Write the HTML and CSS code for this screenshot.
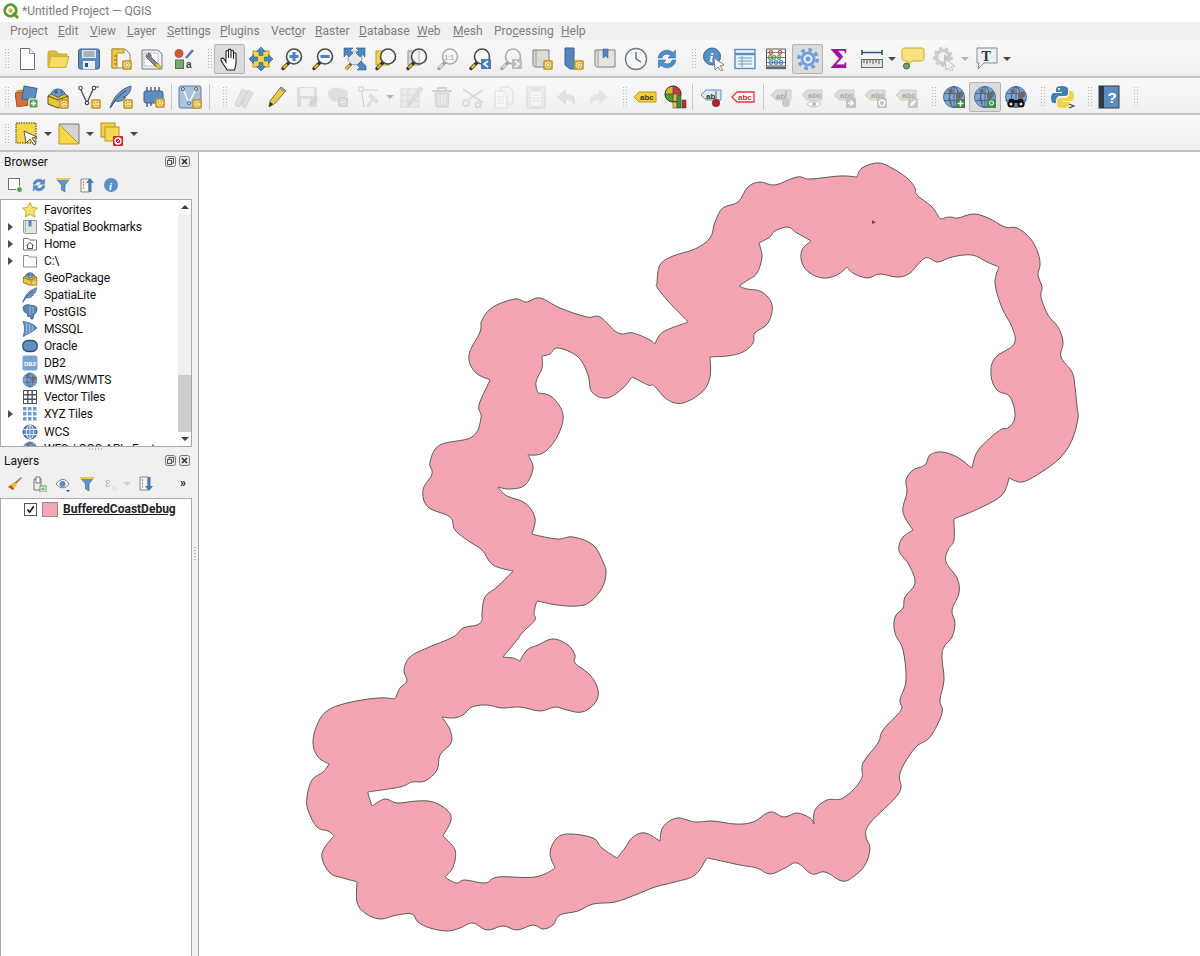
FILE: index.html
```html
<!DOCTYPE html>
<html lang="en">
<head>
<meta charset="utf-8">
<title>*Untitled Project — QGIS</title>
<link rel="stylesheet" href="styles.css">
</head>
<body>
<svg class="sprite" xmlns="http://www.w3.org/2000/svg">
<defs>
<g id="gb"><rect x=".5" y=".5" width="9" height="9" rx="1" fill="#d2a72c" stroke="#b8901f" stroke-width=".6"/><circle cx="5" cy="5" r="2.6" fill="none" stroke="#fff" stroke-width="1.3" stroke-dasharray="1.1 .7"/><circle cx="5" cy="5" r="1" fill="#fff"/></g>
<g id="m"><path d="M3 21.5L9 15.5" stroke="#333" stroke-width="3.4" stroke-linecap="round"/><path d="M3.5 21L7 17.5" stroke="#e6c02e" stroke-width="2.2"/><circle cx="14" cy="9.5" r="7.5" fill="#f4f6f8" stroke="#4a4a4a" stroke-width="1.6"/></g>
<g id="globe"><circle cx="12" cy="12" r="10.5" fill="#7ba6d8" stroke="#4d73a6"/><ellipse cx="12" cy="12" rx="4.5" ry="10.5" fill="none" stroke="#49596e"/><path d="M2 8.5h20M2 15.5h20M12 1.5v21" stroke="#4d5f78" stroke-width=".9"/><path d="M6 5l4-2 1 4-3 3zM14 8l6-2 1 5-5 5-2-3zM6 13l3 1 1 5-3-2z" fill="#6a6a6a"/></g>
<g id="tagy"><path d="M1 12l5-5h17v10H6z" fill="#f2cf3d" stroke="#bd9a1d"/><text x="7" y="15.2" class="st">abc</text></g>
<g id="tagg"><path d="M1 10l5-5h15v10H6z" fill="#dedcd6" stroke="#cfcdc6"/><text x="7" y="13.2" class="stg">abc</text></g>
<symbol id="new" viewBox="0 0 24 24"><path d="M5.5 1.5h9l5 5v16h-14z" fill="#fff" stroke="#6b6b6b"/><path d="M14.5 1.5v5h5" fill="#f2f2f2" stroke="#8b8b8b"/></symbol>
<symbol id="open" viewBox="0 0 24 24"><path d="M2 20V6l1-2h7l2 3h9v4H5l-2 9z" fill="#d9b93e" stroke="#c9a93a"/><path d="M2.500 20.500L5 9.500h18l-3 11z" fill="#f6da66" stroke="#d1b140"/></symbol>
<symbol id="save" viewBox="0 0 24 24"><rect x="1.500" y="2" width="21" height="20" rx="2" fill="#5c8dbf" stroke="#43658a"/><rect x="5" y="3" width="14" height="8" fill="#dfe6ee"/><path d="M6.500 5h11M6.500 7h11M6.500 9h11" stroke="#6a7f96"/><rect x="6" y="14" width="12" height="8" fill="#e9eef2"/><rect x="8" y="16" width="3" height="4" fill="#3a516b"/></symbol>
<symbol id="tmpl" viewBox="0 0 24 24"><path d="M3 2h13l5 5v14H3z" fill="#f4f4f2" stroke="#888"/><path d="M3 2h12v4H8v15H3z" fill="#edc94c" stroke="#b5941f"/><path d="M5 9h3M5 13h3M5 17h3" stroke="#87700f"/><use href="#gb" x="13" y="13"/></symbol>
<symbol id="lmgr" viewBox="0 0 24 24"><path d="M2 3h16l4 4v15H2z" fill="#eef2f6" stroke="#7b7b7b"/><rect x="4" y="6" width="14" height="13" fill="#fff" stroke="#b5c2cf"/><path d="M7 7a3 3 0 0 0 1 5l8 8 3-2-8-8a3 3 0 0 0-3-4l1 3-2 0z" fill="#8a8a8a" stroke="#444" stroke-width=".7"/><path d="M15 18l4 4 2-2-3-4z" fill="#e0c044" stroke="#a8891c" stroke-width=".7"/></symbol>
<symbol id="style" viewBox="0 0 24 24"><circle cx="8" cy="6.500" r="4.500" fill="#c65a3b"/><path d="M15 11L22 3" stroke="#4d7fb5" stroke-width="2.600"/><rect x="4.500" y="13" width="8" height="8.500" fill="#78a878" stroke="#4c7d4c"/><text x="15" y="21" class="sa">a</text></symbol>
<symbol id="hand" viewBox="0 0 24 24"><path d="M9 23C7 19 3.500 15 3 13c-.5-2 1.500-2.500 3-1l2 3V5c0-2 2.500-2 2.500 0v6-7.500c0-1.800 2.500-1.800 2.500 0V11V4.500c0-1.700 2.500-1.700 2.500 0V12V7c0-1.600 2.500-1.600 2.500 0v9c0 3-1 4.500-1.500 7z" fill="#fff" stroke="#222" stroke-width="1.100"/></symbol>
<symbol id="panx" viewBox="0 0 24 24"><rect x="4" y="4" width="16" height="16" fill="#f0d64a" stroke="#b59c1f"/><path d="M12 0l4.500 4.500h-2.500v4h-4v-4H7.500zM12 24l4.500-4.500h-2.500v-4h-4v4H7.500zM0 12l4.500-4.500V10h4v4h-4v2.500zM24 12l-4.500-4.500V10h-4v4h4v2.500z" fill="#4d86c4" stroke="#32608f" stroke-width=".6"/></symbol>
<symbol id="zin" viewBox="0 0 24 24"><use href="#m"/><path d="M14 5v9M9.500 9.500h9" stroke="#4a82bd" stroke-width="3"/></symbol>
<symbol id="zout" viewBox="0 0 24 24"><use href="#m"/><path d="M9.500 9.500h9" stroke="#4a82bd" stroke-width="3"/></symbol>
<symbol id="zfull" viewBox="0 0 24 24"><circle cx="12" cy="11" r="7" fill="#e4e6e8" stroke="#9a9a9a"/><path d="M2 1h8L7.500 3.500 10 6 6 10 3.500 7.500 1 10V1zM22 1v9l-2.500-2.500L17 10l-4-4 2.500-2.500L13 1zM23 19v4h-9l2.500-2.500L14 18l4-4 2.500 2.500z" fill="#4d86c4" stroke="#2f5d8c" stroke-width=".6"/><path d="M3 22l5-5" stroke="#333" stroke-width="3"/><path d="M3 22l4-4" stroke="#e6c02e" stroke-width="2"/></symbol>
<symbol id="zsel" viewBox="0 0 24 24"><rect x="2" y="4" width="13" height="14" fill="#f0d64a" stroke="#b59c1f"/><use href="#m"/></symbol>
<symbol id="zlay" viewBox="0 0 24 24"><path d="M3 4h12v14H3z" fill="#d9d9d6" stroke="#8f8f8f"/><use href="#m"/><path d="M14 3v13" stroke="#aaa"/></symbol>
<symbol id="z11" viewBox="0 0 24 24"><use href="#m"/><text x="8.500" y="12.500" class="s8">1:1</text></symbol>
<symbol id="zlast" viewBox="0 0 24 24"><use href="#m"/><rect x="13" y="12" width="10" height="10" fill="#4d7fb5"/><path d="M20 14l-4 3 4 3" fill="none" stroke="#fff" stroke-width="1.600"/></symbol>
<symbol id="znext" viewBox="0 0 24 24"><use href="#m"/><rect x="13" y="12" width="10" height="10" fill="#777"/><path d="M16 14l4 3-4 3" fill="none" stroke="#fff" stroke-width="1.600"/></symbol>
<symbol id="nmap" viewBox="0 0 24 24"><path d="M3 3h16v17H6c-2 0-3-1-3-2z" fill="#dbdbd8" stroke="#7f7f7f"/><path d="M6 3v16" stroke="#9b9b9b"/><use href="#gb" x="13" y="13"/></symbol>
<symbol id="nbm" viewBox="0 0 24 24"><path d="M4 1h9v16l3 5H9l-5-4z" fill="#5686bb" stroke="#3c6390"/><use href="#gb" x="13" y="13"/></symbol>
<symbol id="sbm" viewBox="0 0 24 24"><path d="M2 3h20v17H5c-2 0-3-1-3-2z" fill="#e3e3e0" stroke="#7f7f7f"/><path d="M5 3v16" stroke="#9b9b9b"/><path d="M10 2h5v9l-2.500-2-2.500 2z" fill="#5686bb" stroke="#3c6390" stroke-width=".6"/></symbol>
<symbol id="clock" viewBox="0 0 24 24"><circle cx="12" cy="12" r="10.500" fill="#f4f6f8" stroke="#6f7b88" stroke-width="1.400"/><path d="M12 5v7l5 3" fill="none" stroke="#555" stroke-width="1.200"/></symbol>
<symbol id="refr" viewBox="0 0 24 24"><path d="M3 11C4 5 9 2.500 14 3.500c2 .4 3 1.300 4 2l2.500-2.500V11H13l2.500-2.500C12 6 8 7 7 11z" fill="#4e8ccb" stroke="#366ea7" stroke-width=".6"/><path d="M21 13c-1 6-6 8.500-11 7.500-2-.4-3-1.300-4-2L3.500 21v-8H11l-2.500 2.500C12 18 16 17 17 13z" fill="#4e8ccb" stroke="#366ea7" stroke-width=".6"/></symbol>
<symbol id="ident" viewBox="0 0 24 24"><circle cx="10" cy="9.500" r="8.500" fill="#5a8ec6" stroke="#3d6a9b"/><text x="7.500" y="15" class="si">i</text><path d="M12 11l10 7-4 1 3 4-2 1-3-4-3 3z" fill="#fff" stroke="#777" stroke-width=".9"/></symbol>
<symbol id="tbl" viewBox="0 0 24 24"><rect x="2" y="2.500" width="20" height="19" fill="#eef3f8" stroke="#5b8cc0" stroke-width="1.400"/><path d="M2 7h20" stroke="#5b8cc0" stroke-width="2.400"/><path d="M5 11h14M5 14h14M5 17h14M9 9v11" stroke="#6f9ccc"/></symbol>
<symbol id="abac" viewBox="0 0 24 24"><path d="M2.500 2v17h19V2z" fill="#f7f7f7" stroke="#555"/><path d="M2 21h20" stroke="#666" stroke-width="2.400"/><path d="M3 5.500h18M3 10.500h18M3 15.500h18" stroke="#888"/><g fill="none" stroke-width="1.300"><g stroke="#c8554a"><circle cx="7" cy="5.500" r="1.800"/><circle cx="16" cy="5.500" r="1.800"/></g><g stroke="#5d9c5d"><circle cx="6" cy="10.500" r="1.800"/><circle cx="10" cy="10.500" r="1.800"/><circle cx="15" cy="10.500" r="1.800"/></g><g stroke="#4d86c4"><circle cx="7" cy="15.500" r="1.800"/><circle cx="12" cy="15.500" r="1.800"/><circle cx="17" cy="15.500" r="1.800"/></g></g></symbol>
<symbol id="gear" viewBox="0 0 24 24"><circle cx="12" cy="12" r="6" fill="#dfe9f5" stroke="#6d9fd8" stroke-width="2.600"/><circle cx="12" cy="12" r="2.400" fill="#6d9fd8"/><circle cx="12" cy="12" r="9.200" fill="none" stroke="#6d9fd8" stroke-width="3.400" stroke-dasharray="3.600 3.630"/></symbol>
<symbol id="ruler" viewBox="0 0 24 24"><path d="M2 3v5M22 3v5M2 5.500h20" stroke="#2f5379" stroke-width="1.600"/><rect x="1.500" y="12.500" width="21" height="8" fill="#e6e6e6" stroke="#6a6a6a"/><path d="M4 13v3M7 13v4M10 13v3M13 13v4M16 13v3M19 13v4" stroke="#555"/></symbol>
<symbol id="tip" viewBox="0 0 24 24"><path d="M4 1h17c1.500 0 2 1 2 2v8c0 2-1 3-3 3H11l-3 4-1-4H4c-2 0-3-1-3-3V3c0-1 1-2 3-2z" fill="#f7e27f" stroke="#c9a93a"/><circle cx="5.500" cy="19" r="3" fill="#6f9f6a" stroke="#3f6a3c"/></symbol>
<symbol id="goff" viewBox="0 0 24 24"><circle cx="10" cy="10" r="6.500" fill="none" stroke="#999" stroke-width="3.500"/><circle cx="10" cy="10" r="8.500" fill="none" stroke="#999" stroke-width="3" stroke-dasharray="3 3"/><path d="M11 7v7l5-3.500z" fill="#888"/><path d="M12 12l10 7-4 1 2 3-2 1-2-3-3 2z" fill="#fff" stroke="#777"/></symbol>
<symbol id="tbox" viewBox="0 0 24 24"><path d="M2 1h20v15H9l-6 6 1-6H2z" fill="#eaf1f6" stroke="#8b8b8b"/><text x="6.500" y="13.500" class="st2">T</text></symbol>
<symbol id="dsm" viewBox="0 0 24 24"><rect x="3" y="5" width="11" height="15" fill="#f2c84a" stroke="#b8901f" transform="rotate(-10 8 12)"/><rect x="1" y="7" width="11" height="14" fill="#d07040" stroke="#a24e28" transform="rotate(-8 7 14)"/><rect x="8" y="2" width="13" height="13" fill="#5d8cc0" stroke="#3c6390" transform="rotate(10 14 8)"/><rect x="14" y="14" width="9" height="9" rx="1" fill="#5a9f5a" stroke="#fff"/><path d="M18.500 16v5M16 18.500h5" stroke="#fff" stroke-width="1.600"/></symbol>
<symbol id="gpk" viewBox="0 0 24 24"><path d="M2 11l10-6 10 6v8l-10 4-10-4z" fill="#e8c43a" stroke="#5e5216"/><path d="M2 11l10 4 10-4" fill="none" stroke="#5e5216"/><path d="M5 8.500C7 3 16 2 19 8.500L12 12.500z" fill="#6f9bd0" stroke="#3e5f88"/><path d="M8 6l3-1 1 3-3 1zM14 6l3 1-2 2z" fill="#55606e"/><use href="#gb" x="13" y="14"/></symbol>
<symbol id="vnew" viewBox="0 0 24 24"><path d="M3 3l7 15 7-16" fill="none" stroke="#4a4a4a" stroke-width="1.300"/><path d="M16 2h6" stroke="#4a4a4a"/><g fill="#fff" stroke="#333"><circle cx="3.500" cy="3" r="1.800"/><circle cx="10" cy="18" r="1.800"/><circle cx="17" cy="3" r="1.800"/></g><use href="#gb" x="14" y="14"/></symbol>
<symbol id="feat" viewBox="0 0 24 24"><path d="M1 23C4 14 9 5 22 1c0 7-4 10-8 11l3 0c-3 4-7 5-11 4z" fill="#6f97c4" stroke="#3f648f"/><path d="M2 22C6 15 11 9 17 6" fill="none" stroke="#2f4f74"/></symbol>
<symbol id="feat2" viewBox="0 0 24 24"><use href="#feat"/><use href="#gb" x="14" y="14"/></symbol>
<symbol id="chip" viewBox="0 0 24 24"><rect x="2" y="6" width="19" height="12" rx="2" fill="#5b8fc4" stroke="#3c6390"/><path d="M5 2v4M9 2v4M13 2v4M17 2v4M5 18v4M9 18v3" stroke="#3c4f64" stroke-width="1.300"/><use href="#gb" x="13" y="13"/></symbol>
<symbol id="vbox" viewBox="0 0 24 24"><rect x="1" y="1" width="22" height="22" rx="2" fill="#a9c3dd" stroke="#5b7fa5"/><path d="M5 4l6 14 7-14" fill="none" stroke="#fff" stroke-width="1.300"/><g fill="#fff" stroke="#555"><circle cx="5" cy="4" r="1.500"/><circle cx="11" cy="18" r="1.500"/><circle cx="18" cy="4" r="1.500"/></g><use href="#gb" x="14" y="14"/></symbol>
<symbol id="pens" viewBox="0 0 24 24"><path d="M3 20L10 4l5 3-8 15zM9 20l7-15 5 3-8 15z" fill="#c9c7c2" stroke="#a8a6a0"/></symbol>
<symbol id="pen" viewBox="0 0 24 24"><path d="M5 22l1-6L17 2l5 4L10 19z" fill="#eacb4c" stroke="#7f7434"/><path d="M5 22l1-5 3 2z" fill="#333"/><path d="M16 3l5 4" stroke="#999" stroke-width="2"/></symbol>
<symbol id="saved" viewBox="0 0 24 24"><rect x="2" y="2" width="20" height="20" rx="2" fill="#bdbdbb"/><rect x="5" y="3" width="14" height="8" fill="#eee"/><rect x="6" y="14" width="10" height="8" fill="#eee"/><path d="M13 22l2-6 6-5 2 3-6 6z" fill="#aaa"/></symbol>
<symbol id="polys" viewBox="0 0 24 24"><path d="M2 8c0-5 7-6 10-5s10 0 10 5-5 4-8 7-12 2-12-7z" fill="#c4c4c2"/><use href="#gb" x="12" y="12"/></symbol>
<symbol id="dig" viewBox="0 0 24 24"><path d="M3 3l5 2 13 0M4 4l3 18" fill="none" stroke="#999"/><rect x="2" y="2" width="4" height="4" fill="#fff" stroke="#999"/><path d="M9 21l5-7-3-3 3-3 8 8-3 3-3-3-5 7z" fill="#c4c4c2"/></symbol>
<symbol id="tedit" viewBox="0 0 24 24"><rect x="2" y="4" width="18" height="18" fill="#e3e2d8" stroke="#b8b7a8"/><path d="M2 10h18M2 16h18M9 4v18" stroke="#b8b7a8"/><path d="M9 21l2-5L21 2l3 2-12 15z" fill="#c9c9c6" stroke="#aaa"/></symbol>
<symbol id="trash" viewBox="0 0 24 24"><path d="M2 6h20M8 6V3h8v3" fill="none" stroke="#a8a39e" stroke-width="2"/><path d="M5 8h14l-1 14H6z" fill="#c8c4c0" stroke="#a8a39e"/><path d="M9 10v10M12 10v10M15 10v10" stroke="#eee"/></symbol>
<symbol id="scis" viewBox="0 0 24 24"><path d="M2 4l20 14M22 5L8 14" stroke="#b0b0ae" stroke-width="1.600"/><circle cx="5" cy="18" r="3" fill="none" stroke="#b0b0ae" stroke-width="1.600"/><circle cx="17" cy="20" r="2.500" fill="none" stroke="#b0b0ae" stroke-width="1.600"/></symbol>
<symbol id="copy" viewBox="0 0 24 24"><path d="M9 2h8l4 4v13H9z" fill="#f4f4f4" stroke="#bcbcbc"/><path d="M3 6h8l4 4v13H3z" fill="#fbfbfb" stroke="#bcbcbc"/><path d="M5 12h7M5 15h7M5 18h7" stroke="#ccc"/></symbol>
<symbol id="paste" viewBox="0 0 24 24"><rect x="3" y="2" width="18" height="21" rx="1" fill="#e6e5df" stroke="#b5b4ac"/><rect x="8" y="1" width="8" height="4" fill="#cfcec6"/><rect x="6" y="6" width="12" height="15" fill="#fafafa" stroke="#c4c4c4"/><path d="M8 10h8M8 13h8M8 16h8" stroke="#ccc"/></symbol>
<symbol id="undo" viewBox="0 0 24 24"><path d="M11 4L2 12l9 8v-5c5 0 7 1 8 6 3-8 0-12-8-12z" fill="#cbc7c2"/></symbol>
<symbol id="redo" viewBox="0 0 24 24"><path d="M13 4l9 8-9 8v-5c-5 0-7 1-8 6-3-8 0-12 8-12z" fill="#cfd1cf"/></symbol>
<symbol id="abcy" viewBox="0 0 24 24"><use href="#tagy"/></symbol>
<symbol id="pie" viewBox="0 0 24 24"><circle cx="9" cy="9" r="8" fill="#d8b52c" stroke="#333"/><path d="M9 9V1a8 8 0 0 1 8 8z" fill="#c63c3c" stroke="#333" stroke-width=".6"/><path d="M9 9H1a8 8 0 0 0 8 8z" fill="#4f9b3d" stroke="#333" stroke-width=".6"/><rect x="9" y="17" width="4" height="6" fill="#eac93d" stroke="#333" stroke-width=".5"/><rect x="13" y="10" width="4" height="13" fill="#3d8f3d" stroke="#333" stroke-width=".5"/><rect x="18" y="15" width="4" height="8" fill="#c0302c" stroke="#333" stroke-width=".5"/></symbol>
<symbol id="abpin" viewBox="0 0 24 24"><path d="M1 10l5-5h15v10H6z" fill="#dbe8f5" stroke="#5b8fc4"/><text x="6" y="13.500" class="st">ab</text><path d="M16 6v10" stroke="#888" stroke-width="1.500"/><circle cx="16" cy="18" r="4" fill="#a3262b"/></symbol>
<symbol id="abcr" viewBox="0 0 24 24"><path d="M1 12l5-5h17v10H6z" fill="#fff" stroke="#e8353a" stroke-width="1.300"/><text x="7" y="15.200" class="str">abc</text></symbol>
<symbol id="abpinoff" viewBox="0 0 24 24"><path d="M1 10l5-5h15v10H6z" fill="#dedcd6" stroke="#cfcdc6"/><text x="6" y="13.500" class="stg">ab</text><path d="M16 6v10" stroke="#bbb" stroke-width="1.500"/><circle cx="16" cy="18" r="4" fill="#c9c9c9"/></symbol>
<symbol id="abceye" viewBox="0 0 24 24"><use href="#tagg"/><path d="M6 19c4-4 10-4 14 0-4 4-10 4-14 0z" fill="#fff" stroke="#bbb"/><circle cx="13" cy="19" r="2" fill="#bbb"/></symbol>
<symbol id="abcmove" viewBox="0 0 24 24"><use href="#tagg"/><rect x="13" y="13" width="10" height="10" rx="1" fill="#c4c4c4"/><path d="M15 18h4M17.500 15.500L20 18l-2.500 2.500" fill="none" stroke="#fff" stroke-width="1.500"/></symbol>
<symbol id="abcrot" viewBox="0 0 24 24"><use href="#tagg"/><rect x="13" y="13" width="10" height="10" rx="1" fill="#c4c4c4"/><circle cx="18" cy="18" r="2.800" fill="none" stroke="#fff" stroke-width="1.300"/></symbol>
<symbol id="abcedit" viewBox="0 0 24 24"><use href="#tagg"/><rect x="13" y="13" width="10" height="10" rx="1" fill="#c9c9c9"/><path d="M15 21l1-3 4-3 1 1-3 4z" fill="#fff"/></symbol>
<symbol id="gadd" viewBox="0 0 24 24"><use href="#globe"/><rect x="14" y="14" width="9" height="9" fill="#3f7f45"/><path d="M18.500 15.500v6M15.500 18.500h6" stroke="#fff" stroke-width="1.600"/></symbol>
<symbol id="gzoom" viewBox="0 0 24 24"><use href="#globe"/><rect x="14" y="14" width="9" height="9" fill="#3f8f55"/><circle cx="18.500" cy="18" r="2" fill="none" stroke="#fff"/></symbol>
<symbol id="gbin" viewBox="0 0 24 24"><use href="#globe"/><circle cx="7" cy="19" r="3.600" fill="#111"/><circle cx="17" cy="19" r="3.600" fill="#111"/><path d="M5 14h5v4H5zM14 14h5v4h-5zM9 15h6v3H9z" fill="#111"/><circle cx="7" cy="19" r="1.600" fill="#ddd"/><circle cx="17" cy="19" r="1.600" fill="#ddd"/></symbol>
<symbol id="py" viewBox="0 0 24 24"><path d="M11 1c-4 0-6 1-6 3v3h6v1H3C1 8 0 10 0 13s1 5 3 5h2v-3c0-2 2-4 4-4h5c2 0 3-1 3-3V4c0-2-3-3-6-3z" fill="#3f7fb5"/><circle cx="8" cy="4" r="1" fill="#fff"/><path d="M18 6v3c0 2-2 4-4 4H9c-2 0-3 1-3 3v4c0 2 3 3 6 3 4 0 6-1 6-3v-3h-6v-1h8c2 0 3-2 3-5s-1-5-3-5z" fill="#f2d34e"/><path d="M18 19l5 2-5 2" fill="none" stroke="#444" stroke-width="1.200"/></symbol>
<symbol id="help" viewBox="0 0 24 24"><rect x="2" y="1" width="20" height="22" fill="#5b8bbf" stroke="#333a44"/><rect x="2" y="1" width="5" height="22" fill="#2d3a48"/><text x="10.500" y="17.500" class="sq">?</text></symbol>
<symbol id="sel" viewBox="0 0 24 24"><rect x="1" y="1" width="20" height="20" fill="#f6d846" stroke="#333" stroke-dasharray="1.500 1"/><path d="M9 9l13 6-5 1 4 6-2 1-4-6-4 4z" fill="#fff" stroke="#555"/></symbol>
<symbol id="tri" viewBox="0 0 24 24"><path d="M2 2h20v20z" fill="#d4d4d4" stroke="#777"/><path d="M2 2v20h20z" fill="#f6d846" stroke="#b89a1c"/></symbol>
<symbol id="stack" viewBox="0 0 24 24"><rect x="1" y="1" width="14" height="14" fill="#f2d24a" stroke="#b5941f"/><rect x="5" y="5" width="14" height="14" fill="#f4d850" stroke="#b5941f"/><rect x="13" y="14" width="10" height="10" rx="1" fill="#d6232a"/><circle cx="18" cy="19" r="3" fill="none" stroke="#fff" stroke-width="1.300"/><path d="M16 21l4-4" stroke="#fff"/></symbol>
<symbol id="padd" viewBox="0 0 16 16"><rect x="1.500" y="1.500" width="11" height="11" fill="#fff" stroke="#777"/><circle cx="12.500" cy="12.500" r="3" fill="#5a9f5a" stroke="#fff"/></symbol>
<symbol id="filt" viewBox="0 0 16 16"><path d="M1 1.500h14L10 8v7L6.500 13V8z" fill="#5f94c8" stroke="#3c6390" stroke-width=".6"/><path d="M1 1h14v2H1z" fill="#edc94c"/></symbol>
<symbol id="pexp" viewBox="0 0 16 16"><path d="M2 2h8v13H2z" fill="#f4f4f4" stroke="#888"/><path d="M4 5h1M4 8h1M4 11h1" stroke="#d8913c" stroke-width="2"/><path d="M11 1l4 5h-2.500v9h-3V6H7z" fill="#4a7bb0"/></symbol>
<symbol id="pdown" viewBox="0 0 16 16"><path d="M2 1h8v13H2z" fill="#f4f4f4" stroke="#888"/><path d="M4 4h1M4 8h1M4 11h1" stroke="#d8913c" stroke-width="2"/><path d="M11 15l4-5h-2.500V1h-3v9H7z" fill="#4a7bb0"/></symbol>
<symbol id="info" viewBox="0 0 16 16"><circle cx="8" cy="8" r="7" fill="#5a8ec6"/><text x="6" y="12.500" class="si2">i</text></symbol>
<symbol id="brush" viewBox="0 0 16 16"><path d="M9 8l6-6-1-1-7 6z" fill="#a87a3a"/><path d="M1 11l6-5 3 3-4 5z" fill="#e2c13b"/><path d="M1 11l3-2 3 4-1 1z" fill="#c44a3a"/></symbol>
<symbol id="ladd" viewBox="0 0 16 16"><path d="M3 3h7v11H3z" fill="#eee" stroke="#777"/><path d="M5 1h4v6H5z" fill="#fff" stroke="#777"/><rect x="9" y="10" width="6" height="6" fill="#fff" stroke="#5a9f5a"/><path d="M12 11v4M10 13h4" stroke="#5a9f5a"/></symbol>
<symbol id="leye" viewBox="0 0 16 16"><path d="M1 8c4-6 10-6 13 0-3 5-9 5-13 0z" fill="#fff" stroke="#777"/><circle cx="7.500" cy="8" r="3" fill="#5a8ec6"/><path d="M11 14h4l-2 2z" fill="#444"/></symbol>
<symbol id="eps" viewBox="0 0 16 16"><text x="2" y="11" class="sg">&#949;</text><rect x="9" y="10" width="5" height="5" fill="#ddd"/></symbol>
<symbol id="star" viewBox="0 0 16 16"><path d="M8 .5l2.300 4.900 5.200.7-3.800 3.600 1 5.300L8 12.400 3.300 15l1-5.300L.5 6.100l5.200-.7z" fill="#f7e36a" stroke="#c9a93a"/></symbol>
<symbol id="bm" viewBox="0 0 16 16"><path d="M1.500 1.500h13v13h-11c-1 0-2-.5-2-1.500z" fill="#e4e4e1" stroke="#9a9a9a"/><path d="M3.500 2v11" stroke="#aaa"/><path d="M6.500 1h3v7L8 7 6.500 8z" fill="#5686bb"/></symbol>
<symbol id="fhome" viewBox="0 0 16 16"><path d="M1.500 2.500h5l1 1.500h7v10h-13z" fill="#fff" stroke="#777"/><path d="M4.500 9.500L8 6.500l3.500 3M5.500 9v3.500h5V9" fill="none" stroke="#555"/></symbol>
<symbol id="fold" viewBox="0 0 16 16"><path d="M1.500 2.500h5l1 1.500h7v10h-13z" fill="#fbfbf8" stroke="#8f8f8f"/></symbol>
<symbol id="pg" viewBox="0 0 16 16"><path d="M1 4c0-3 4-4 7-3s7 0 7 4-2 5-3 5l-1 5H9l-1-3-2 1-1-4C3 9 1 7 1 4z" fill="#5d85b5" stroke="#2f4f74" stroke-width=".7"/><path d="M8 2v9M11 3v6" stroke="#cbd8e6" stroke-width=".7"/></symbol>
<symbol id="ms" viewBox="0 0 16 16"><path d="M1 .5C6 1 12 3 15 7c-3 3-9 6-14 8.500 2-5 2-10 0-15z" fill="#5f8fc0" stroke="#3c6390" stroke-width=".7"/><path d="M4 2c1 4 1 8 0 11M7 3c1 3 1 6 0 9M10 5c.5 2 .5 3 0 5" stroke="#cfe0ef" stroke-width=".7" fill="none"/></symbol>
<symbol id="or" viewBox="0 0 16 16"><rect x=".8" y="2.500" width="14.400" height="11" rx="5" fill="#5f8fc4" stroke="#2f4f74" stroke-width="1.300"/></symbol>
<symbol id="db2" viewBox="0 0 16 16"><rect x=".5" y=".5" width="15" height="15" rx="2" fill="#7ba3cf"/><text x="8" y="10.500" class="sdb">DB2</text></symbol>
<symbol id="wms" viewBox="0 0 24 24"><use href="#globe"/></symbol>
<symbol id="vt" viewBox="0 0 16 16"><rect x="1.500" y="1.500" width="13" height="13" fill="#fff" stroke="#4a5360"/><path d="M1.500 5.800h13M1.500 10.200h13M5.800 1.500v13M10.200 1.500v13" stroke="#4a5360" stroke-width="1.400"/></symbol>
<symbol id="xyz" viewBox="0 0 16 16"><path d="M1 1h3.500v3.500H1zM6 1h3.500v3.500H6zM11 1h3.500v3.500H11zM1 6h3.500v3.500H1zM6 6h3.500v3.500H6zM11 6h3.500v3.500H11zM1 11h3.500v3.500H1zM6 11h3.500v3.500H6zM11 11h3.500v3.500H11z" fill="#6f9cd0"/></symbol>
<symbol id="wcs" viewBox="0 0 16 16"><circle cx="8" cy="8" r="7" fill="#5f8fc4" stroke="#35557d"/><path d="M1 5.500h14M1 10.500h14M8 1v14" stroke="#fff" stroke-width=".8"/><ellipse cx="8" cy="8" rx="3.500" ry="7" fill="none" stroke="#fff" stroke-width=".8"/></symbol>
<symbol id="dk" viewBox="0 0 12 12"><rect x=".5" y=".5" width="10" height="10" rx="2" fill="#e8e8e8" stroke="#777"/><rect x="4" y="2.500" width="4.500" height="4.500" fill="none" stroke="#555"/><rect x="2.500" y="4.500" width="4" height="4" fill="#e8e8e8" stroke="#555"/></symbol>
<symbol id="dx" viewBox="0 0 12 12"><rect x=".5" y=".5" width="10" height="10" rx="2" fill="#e8e8e8" stroke="#777"/><path d="M3 3l5 5M8 3L3 8" stroke="#333" stroke-width="1.600"/></symbol>
<symbol id="logo" viewBox="0 0 16 16"><circle cx="7.500" cy="7.500" r="5.800" fill="#fff" stroke="#5d9a36" stroke-width="2.800"/><circle cx="7.500" cy="7.500" r="2.200" fill="#e4b93b"/><path d="M6.500 8.500l1.800-.8-.6 1.800z" fill="#c94b36"/><path d="M10 10l5 5" stroke="#5d9a36" stroke-width="2.800"/></symbol>
</defs>
</svg>

<div class="win">
  <header class="titlebar">
    <svg class="logo"><use href="#logo"/></svg>
    <span class="title">*Untitled Project — QGIS</span>
  </header>
  <nav class="menubar">
    <span>Pro<u>j</u>ect</span><span><u>E</u>dit</span><span><u>V</u>iew</span><span><u>L</u>ayer</span><span><u>S</u>ettings</span><span><u>P</u>lugins</span><span>Vect<u>o</u>r</span><span><u>R</u>aster</span><span><u>D</u>atabase</span><span><u>W</u>eb</span><span><u>M</u>esh</span><span>Pro<u>c</u>essing</span><span><u>H</u>elp</span>
  </nav>

  <div class="tb tb1">
    <i class="hd hd0"></i>
    <div class="b"><svg class="i"><use href="#new"/></svg></div>
    <div class="b"><svg class="i"><use href="#open"/></svg></div>
    <div class="b"><svg class="i"><use href="#save"/></svg></div>
    <div class="b"><svg class="i"><use href="#tmpl"/></svg></div>
    <div class="b"><svg class="i"><use href="#lmgr"/></svg></div>
    <div class="b"><svg class="i"><use href="#style"/></svg></div>
    <i class="hd"></i>
    <div class="b on"><svg class="i"><use href="#hand"/></svg></div>
    <div class="b"><svg class="i"><use href="#panx"/></svg></div>
    <div class="b"><svg class="i"><use href="#zin"/></svg></div>
    <div class="b"><svg class="i"><use href="#zout"/></svg></div>
    <div class="b"><svg class="i"><use href="#zfull"/></svg></div>
    <div class="b"><svg class="i"><use href="#zsel"/></svg></div>
    <div class="b"><svg class="i"><use href="#zlay"/></svg></div>
    <div class="b off"><svg class="i"><use href="#z11"/></svg></div>
    <div class="b"><svg class="i"><use href="#zlast"/></svg></div>
    <div class="b off"><svg class="i"><use href="#znext"/></svg></div>
    <div class="b"><svg class="i"><use href="#nmap"/></svg></div>
    <div class="b"><svg class="i"><use href="#nbm"/></svg></div>
    <div class="b"><svg class="i"><use href="#sbm"/></svg></div>
    <div class="b"><svg class="i"><use href="#clock"/></svg></div>
    <div class="b"><svg class="i"><use href="#refr"/></svg></div>
    <i class="hd"></i>
    <div class="b"><svg class="i"><use href="#ident"/></svg></div>
    <div class="b"><svg class="i"><use href="#tbl"/></svg></div>
    <div class="b"><svg class="i"><use href="#abac"/></svg></div>
    <div class="b on"><svg class="i"><use href="#gear"/></svg></div>
    <div class="b sigma">Σ</div>
    <div class="b gap6"><svg class="i"><use href="#ruler"/></svg></div><i class="ar ar-a"></i>
    <div class="b gapn"><svg class="i"><use href="#tip"/></svg></div>
    <div class="b off"><svg class="i"><use href="#goff"/></svg></div><i class="ar ar-off ar-b"></i>
    <div class="b gapn"><svg class="i"><use href="#tbox"/></svg></div><i class="ar ar-b"></i>
  </div>

  <div class="tb tb2">
    <i class="hd hd0"></i>
    <div class="b"><svg class="i"><use href="#dsm"/></svg></div>
    <div class="b"><svg class="i"><use href="#gpk"/></svg></div>
    <div class="b"><svg class="i"><use href="#vnew"/></svg></div>
    <div class="b"><svg class="i"><use href="#feat2"/></svg></div>
    <div class="b gap2"><svg class="i"><use href="#chip"/></svg></div>
    <i class="sep sep-s"></i>
    <div class="b"><svg class="i"><use href="#vbox"/></svg></div>
    <i class="sep"></i>
    <i class="hd"></i>
    <div class="b off"><svg class="i"><use href="#pens"/></svg></div>
    <div class="b"><svg class="i"><use href="#pen"/></svg></div>
    <div class="b off"><svg class="i"><use href="#saved"/></svg></div>
    <div class="b off"><svg class="i"><use href="#polys"/></svg></div>
    <div class="b off"><svg class="i"><use href="#dig"/></svg></div><i class="ar ar-off ar-n"></i>
    <div class="b off"><svg class="i"><use href="#tedit"/></svg></div>
    <div class="b off"><svg class="i"><use href="#trash"/></svg></div>
    <div class="b off"><svg class="i"><use href="#scis"/></svg></div>
    <div class="b off"><svg class="i"><use href="#copy"/></svg></div>
    <div class="b off"><svg class="i"><use href="#paste"/></svg></div>
    <div class="b off"><svg class="i"><use href="#undo"/></svg></div>
    <div class="b off"><svg class="i"><use href="#redo"/></svg></div>
    <i class="hd"></i>
    <div class="b"><svg class="i"><use href="#abcy"/></svg></div>
    <div class="b"><svg class="i"><use href="#pie"/></svg></div>
    <i class="sep sep-s"></i>
    <div class="b"><svg class="i"><use href="#abpin"/></svg></div>
    <div class="b"><svg class="i"><use href="#abcr"/></svg></div>
    <i class="sep"></i>
    <div class="b"><svg class="i"><use href="#abpinoff"/></svg></div>
    <div class="b"><svg class="i"><use href="#abceye"/></svg></div>
    <div class="b"><svg class="i"><use href="#abcmove"/></svg></div>
    <div class="b"><svg class="i"><use href="#abcrot"/></svg></div>
    <div class="b"><svg class="i"><use href="#abcedit"/></svg></div>
    <i class="hd"></i>
    <div class="b"><svg class="i"><use href="#gadd"/></svg></div>
    <div class="b on"><svg class="i"><use href="#gzoom"/></svg></div>
    <div class="b"><svg class="i"><use href="#gbin"/></svg></div>
    <i class="hd"></i>
    <div class="b"><svg class="i"><use href="#py"/></svg></div>
    <i class="hd"></i>
    <div class="b"><svg class="i"><use href="#help"/></svg></div>
    <i class="hd"></i>
  </div>

  <div class="tb tb3">
    <i class="hd hd0"></i>
    <div class="b"><svg class="i"><use href="#sel"/></svg></div><i class="ar ar-t3"></i>
    <div class="b"><svg class="i"><use href="#tri"/></svg></div><i class="ar ar-t3"></i>
    <div class="b b-st"><svg class="i"><use href="#stack"/></svg></div><i class="ar ar-t3"></i>
  </div>

  <main class="main">
    <aside class="dock">
      <section class="panel panel-browser">
        <div class="ph ph-b"><span>Browser</span><svg class="dk"><use href="#dk"/></svg><svg class="dk"><use href="#dx"/></svg></div>
        <div class="pt">
          <div class="pb"><svg class="s16"><use href="#padd"/></svg></div>
          <div class="pb"><svg class="s16"><use href="#refr"/></svg></div>
          <div class="pb"><svg class="s16"><use href="#filt"/></svg></div>
          <div class="pb"><svg class="s16"><use href="#pexp"/></svg></div>
          <div class="pb"><svg class="s16"><use href="#info"/></svg></div>
        </div>
        <div class="tree">
          <div class="rows">
            <div class="row"><b></b><svg class="s16"><use href="#star"/></svg><span>Favorites</span></div>
            <div class="row"><b class="tw"></b><svg class="s16"><use href="#bm"/></svg><span>Spatial Bookmarks</span></div>
            <div class="row"><b class="tw"></b><svg class="s16"><use href="#fhome"/></svg><span>Home</span></div>
            <div class="row"><b class="tw"></b><svg class="s16"><use href="#fold"/></svg><span>C:\</span></div>
            <div class="row"><b></b><svg class="s16"><use href="#gpk"/></svg><span>GeoPackage</span></div>
            <div class="row"><b></b><svg class="s16"><use href="#feat"/></svg><span>SpatiaLite</span></div>
            <div class="row"><b></b><svg class="s16"><use href="#pg"/></svg><span>PostGIS</span></div>
            <div class="row"><b></b><svg class="s16"><use href="#ms"/></svg><span>MSSQL</span></div>
            <div class="row"><b></b><svg class="s16"><use href="#or"/></svg><span>Oracle</span></div>
            <div class="row"><b></b><svg class="s16"><use href="#db2"/></svg><span>DB2</span></div>
            <div class="row"><b></b><svg class="s16"><use href="#wms"/></svg><span>WMS/WMTS</span></div>
            <div class="row"><b></b><svg class="s16"><use href="#vt"/></svg><span>Vector Tiles</span></div>
            <div class="row"><b class="tw"></b><svg class="s16"><use href="#xyz"/></svg><span>XYZ Tiles</span></div>
            <div class="row"><b></b><svg class="s16"><use href="#wcs"/></svg><span>WCS</span></div>
            <div class="row"><b></b><svg class="s16"><use href="#wms"/></svg><span>WFS / OGC API - Features</span></div>
          </div>
          <div class="sb">
            <div class="sb-btn"><i class="up"></i></div>
            <div class="sb-track"><div class="sb-thumb"></div></div>
            <div class="sb-btn"><i class="dn"></i></div>
          </div>
        </div>
      </section>
      <div class="hsplit"><i></i></div>
      <section class="panel panel-layers">
        <div class="ph"><span>Layers</span><svg class="dk"><use href="#dk"/></svg><svg class="dk"><use href="#dx"/></svg></div>
        <div class="pt">
          <div class="pb"><svg class="s16"><use href="#brush"/></svg></div>
          <div class="pb"><svg class="s16"><use href="#ladd"/></svg></div>
          <div class="pb"><svg class="s16"><use href="#leye"/></svg></div>
          <div class="pb"><svg class="s16"><use href="#filt"/></svg></div>
          <div class="pb pb-off"><svg class="s16"><use href="#eps"/></svg><i class="ar ar-off ar-s"></i></div>
          <div class="pb"><svg class="s16"><use href="#pdown"/></svg></div>
          <span class="more">»</span>
        </div>
        <div class="ltree">
          <div class="lrow">
            <span class="chk"><svg viewBox="0 0 12 12"><path d="M2.500 6l2.500 3 4.500-6.500" fill="none" stroke="#111" stroke-width="1.700"/></svg></span>
            <span class="swatch"></span>
            <span class="lname">BufferedCoastDebug</span>
          </div>
        </div>
      </section>
    </aside>
    <div class="vsplit"><i></i></div>
    <div class="map">
      <svg class="canvas" viewBox="199 152 1001 804">
        <path id="shape" class="poly" fill-rule="evenodd"/>
        <path class="mark" d="M872 220l4 2.500-4 1.500z"/>
      </svg>
    </div>
  </main>
</div>
<script src="script.js"></script>
</body>
</html>
```

FILE: styles.css
```css
* { box-sizing: border-box; }
html, body { margin: 0; height: 100%; }
body { font-family: Roboto, "Open Sans", sans-serif; font-size: 12px; color: #111; background: #f0f0f0; overflow: hidden; }
.sprite { display: block; width: 0; height: 0; }
.win { display: flex; flex-direction: column; width: 1200px; height: 956px; overflow: hidden; }

.titlebar { height: 22px; flex: none; background: #fff; display: flex; align-items: center; padding-left: 3px; }
.logo { width: 16px; height: 16px; flex: none; }
.title { margin-left: 3px; color: #7c7c7c; font-size: 12px; }

.menubar { height: 18px; flex: none; background: #f0f0f0; display: grid; grid-template-columns: 48px 32px 37px 40px 53px 51px 44px 44px 58px 36px 41px 67px auto; padding-left: 10px; align-items: center; color: #7d7d7d; font-size: 12px; }

.tb { flex: none; display: flex; align-items: center; background: linear-gradient(#f9f9f9, #efefef); border-bottom: 2px solid #c4c4c4; padding-top: 2px; }
.tb1 { height: 38px; }
.tb2 { height: 37px; }
.tb3 { height: 37px; }

.b { width: 31.25px; height: 30px; flex: none; display: flex; align-items: center; justify-content: center; }
.b.on { background: #dcdcdc; border: 1px solid #b4b4b4; border-radius: 2px; }
.b.off .i { opacity: .42; filter: grayscale(1); }
.gap2 { margin-left: 2px; }
.gap6 { margin-left: 2px; }
.gapn { margin-left: -1px; }
.b-st { margin-left: 1px; }
.i { width: 24px; height: 24px; display: block; }
.sigma { font-family: "DejaVu Serif", serif; font-size: 26px; font-weight: 700; color: #a0109a; line-height: 1; }

.hd { width: 15.300px; height: 22px; flex: none; background: radial-gradient(circle, #b5b5b5 .8px, transparent 1px) 8.500px 0 / 3px 3px repeat-y; position: relative; }
.hd::after { content: ""; position: absolute; left: 11.500px; top: 0; width: 3px; height: 22px; background: radial-gradient(circle, #b5b5b5 .8px, transparent 1px) 0 0 / 3px 3px repeat-y; }
.hd0 { width: 11.300px; background-position: 3.500px 0; }
.hd0::after { left: 6.500px; }
.ar { width: 14px; flex: none; height: 4px; display: flex; justify-content: center; }
.ar::before { content: ""; border-left: 4px solid transparent; border-right: 4px solid transparent; border-top: 4px solid #4a4a4a; }
.ar-off::before { border-top-color: #b5b5b5; }
.ar-a { margin-left: -3px; }
.ar-b { margin-left: -2px; }
.ar-n { width: 10px; }
.ar-t3 { width: 11px; }
.ar-s { width: 16px; }
.sep { width: 8px; height: 26px; flex: none; position: relative; }
.sep::after { content: ""; position: absolute; left: 4px; top: 0; width: 1px; height: 26px; background: #c8c8c8; }
.sep-s { width: 4.600px; }
.sep-s::after { left: 1px; }

.main { flex: 1; min-height: 0; display: flex; }
.dock { width: 192px; flex: none; display: flex; flex-direction: column; background: #f0f0f0; }
.panel { display: flex; flex-direction: column; }
.panel-layers { flex: 1; min-height: 0; }
.ph { height: 18px; flex: none; display: flex; align-items: center; padding: 0 1px 0 4px; font-size: 12px; gap: 2px; }
.ph-b { height: 19px; }
.ph span { flex: 1; }
.dk { width: 12px; height: 12px; }
.pt { height: 28px; flex: none; display: flex; align-items: center; padding-left: 3px; position: relative; }
.pb { width: 24px; height: 24px; flex: none; display: flex; align-items: center; justify-content: center; }
.pb-off { width: 40px; justify-content: flex-start; padding-left: 4px; opacity: .55; }
.pb-off + .pb { margin-left: -5px; }
.s16 { width: 16px; height: 16px; flex: none; display: block; }
.more { position: absolute; left: 180px; top: 6px; font-size: 12px; font-weight: 700; color: #222; }

.tree { height: 248px; flex: none; background: #fff; border: 1px solid #a9a9a9; display: flex; overflow: hidden; }
.rows { flex: 1; min-width: 0; padding-top: 1px; }
.row { height: 17.080px; display: flex; align-items: center; white-space: nowrap; font-size: 12px; }
.row b { width: 21px; flex: none; display: flex; padding-left: 7px; }
.row b.tw::before { content: ""; border-top: 4px solid transparent; border-bottom: 4px solid transparent; border-left: 5px solid #4e4e4e; }
.row span { margin-left: 6px; letter-spacing: -.15px; }
.sb { width: 13px; flex: none; background: #f0f0f0; display: flex; flex-direction: column; }
.sb-btn { height: 14px; flex: none; background: #fbfbfb; display: flex; align-items: center; justify-content: center; }
.sb-track { flex: 1; padding-top: 161px; }
.sb-thumb { height: 100%; background: #cdcdcd; }
.up { border-left: 4px solid transparent; border-right: 4px solid transparent; border-bottom: 4px solid #444; }
.dn { border-left: 4px solid transparent; border-right: 4px solid transparent; border-top: 4px solid #444; }

.hsplit { height: 5px; flex: none; display: flex; justify-content: center; }
.hsplit i { width: 16px; height: 2px; margin-top: 1px; background: radial-gradient(circle, #b8b8b8 .7px, transparent 1px) 0 0 / 3px 2px repeat-x; }

.ltree { flex: 1; background: #fff; border: 1px solid #a9a9a9; border-bottom: 0; padding-top: 2px; }
.lrow { height: 16px; display: flex; align-items: center; padding-left: 23px; }
.chk { width: 13px; height: 13px; border: 1px solid #555; background: #fff; display: flex; }
.chk svg { width: 11px; height: 11px; }
.swatch { width: 16px; height: 15px; margin-left: 5px; background: #f4a6b2; border: 1px solid #8f8f8f; }
.lname { margin-left: 5px; font-weight: 700; text-decoration: underline; font-size: 12px; color: #222; }

.vsplit { width: 6px; flex: none; display: flex; align-items: center; justify-content: center; background: #f0f0f0; }
.vsplit i { width: 2px; height: 16px; background: radial-gradient(circle, #b8b8b8 .7px, transparent 1px) 0 0 / 2px 3px repeat-y; }
.map { flex: 1; min-width: 0; background: #fff; border-left: 1px solid #a9a9a9; }
.canvas { width: 100%; height: 100%; display: block; }
.poly { fill: #f4a5b1; stroke: #5a5a5a; stroke-width: 1; stroke-linejoin: round; }
.mark { fill: #555; }

.st { font: 700 8px "Liberation Sans", sans-serif; fill: #3a3214; }
.stg { font: 700 8px "Liberation Sans", sans-serif; fill: #a9a9a4; }
.str { font: 700 8px "Liberation Sans", sans-serif; fill: #d8262c; }
.st2 { font: 700 14px "Liberation Serif", serif; fill: #333; }
.sa { font: 700 10px "Liberation Sans", sans-serif; fill: #444; }
.s8 { font: 700 6.500px "Liberation Sans", sans-serif; fill: #555; }
.si { font: italic 700 13px "Liberation Serif", serif; fill: #fff; }
.si2 { font: italic 700 11px "Liberation Serif", serif; fill: #fff; }
.sq { font: 700 15px "Liberation Sans", sans-serif; fill: #fff; }
.sg { font: 13px "Liberation Sans", sans-serif; fill: #888; }
.sdb { font: 700 6px "Liberation Sans", sans-serif; fill: #fff; text-anchor: middle; }
```

FILE: script.js
```js
var outer = [857,177,862,168,877,163,890,167,907,178,915,188,917,195,932,207,940,219,950,217,958,218,973,214,988,218,1005,227,1017,228,1030,238,1038,253,1040,265,1038,275,1042,287,1041,297,1048,315,1058,327,1063,342,1061,357,1072,372,1075,387,1077,407,1078,418,1072,440,1060,458,1040,473,1022,482,1009,478,1002,495,980,508,954,519,954,540,948,550,946,562,957,578,959,593,952,610,955,623,952,637,944,647,942,658,944,680,940,700,942,713,930,737,915,748,900,773,899,793,870,823,866,837,870,848,865,865,853,877,842,881,825,872,812,874,797,863,785,868,770,874,757,868,740,865,707,858,695,875,675,882,655,887,635,895,615,902,593,904,578,911,560,915,553,925,543,929,533,925,517,930,503,926,487,930,473,923,460,928,447,931,430,928,418,922,412,914,397,915,380,919,365,913,357,902,357,882,343,878,330,873,322,858,325,847,334,836,328,831,317,827,308,810,307,797,312,780,323,772,329,764,318,757,313,743,317,725,327,711,347,703,378,698,395,699,400,688,407,681,404,670,410,657,427,648,453,637,463,628,477,625,482,620,482,613,485,597,497,587,513,571,493,565,482,550,470,542,455,530,450,517,428,507,423,490,432,474,430,462,440,445,472,437,481,418,479,405,490,380,475,372,469,355,480,332,482,320,493,307,515,299,526,302,540,298,560,308,587,317,600,317,618,333,633,333,650,340,655,344,663,332,688,322,667,300,657,287,657,283,660,265,673,256,695,249,710,238,715,222,723,208,738,202,748,187,760,182,775,185,797,177,810,179,840,176];
var inner = [788,227,775,231,770,237,759,243,762,257,757,273,748,280,739,286,747,289,762,292,772,305,768,323,755,333,753,343,743,352,727,356,710,357,710,377,702,392,683,403,668,400,658,390,653,385,648,385,632,377,623,388,607,398,592,392,588,375,578,357,558,348,550,354,542,356,542,368,536,382,538,393,552,397,563,415,557,437,543,453,528,455,533,468,525,485,510,489,498,487,507,496,525,503,535,518,532,534,557,539,573,537,593,545,603,562,606,573,602,588,590,602,577,606,557,605,537,601,534,613,535,620,523,632,517,640,503,657,513,658,520,661,527,650,538,645,553,639,568,645,575,655,575,663,590,675,598,690,595,703,582,712,567,710,555,707,540,711,520,707,502,708,487,705,472,707,463,715,453,718,442,717,450,730,451,743,440,755,437,770,425,781,412,782,400,787,368,792,372,806,385,799,397,803,417,801,433,802,447,810,451,820,443,836,455,850,453,867,445,877,456,883,465,880,485,883,498,877,535,877,555,868,550,853,557,838,570,834,593,838,602,848,617,858,625,848,633,837,645,833,660,841,663,827,677,818,695,822,713,821,735,824,753,822,770,812,784,817,797,813,810,818,814,824,815,810,827,800,843,798,861,780,863,763,878,743,883,730,901,710,900,700,906,680,903,650,895,633,895,617,903,608,905,597,915,583,909,565,900,553,899,546,903,537,913,530,903,512,907,492,906,480,913,470,925,465,930,455,942,452,957,457,972,468,977,452,990,438,1002,429,1008,428,1015,417,1010,397,997,390,991,375,995,358,1014,344,1012,327,1002,308,995,283,999,267,987,262,972,255,952,257,938,262,925,258,910,273,897,277,880,274,867,278,853,273,847,267,837,275,823,278,810,273,802,263,802,250,811,241,797,233];

function smooth(a) {
  var n = a.length / 2, d = "M" + a[0] + " " + a[1];
  function p(i) { i = (i + n) % n; return [a[2 * i], a[2 * i + 1]]; }
  /* a sharp turn keeps its corner; a gentle one is rounded */
  function k(i) {
    var q = p(i - 1), r = p(i), s = p(i + 1);
    var ax = r[0] - q[0], ay = r[1] - q[1], bx = s[0] - r[0], by = s[1] - r[1];
    var c = (ax * bx + ay * by) / (Math.hypot(ax, ay) * Math.hypot(bx, by));
    return c < 0.45 ? 0.02 : 1 / 5.5;
  }
  for (var i = 0; i < n; i++) {
    var p0 = p(i - 1), p1 = p(i), p2 = p(i + 1), p3 = p(i + 2), t1 = k(i), t2 = k(i + 1);
    d += "C" + (p1[0] + (p2[0] - p0[0]) * t1).toFixed(1) + " " + (p1[1] + (p2[1] - p0[1]) * t1).toFixed(1) + " " +
         (p2[0] - (p3[0] - p1[0]) * t2).toFixed(1) + " " + (p2[1] - (p3[1] - p1[1]) * t2).toFixed(1) + " " + p2[0] + " " + p2[1];
  }
  return d + "Z";
}
document.getElementById("shape").setAttribute("d", smooth(outer) + smooth(inner));
```
